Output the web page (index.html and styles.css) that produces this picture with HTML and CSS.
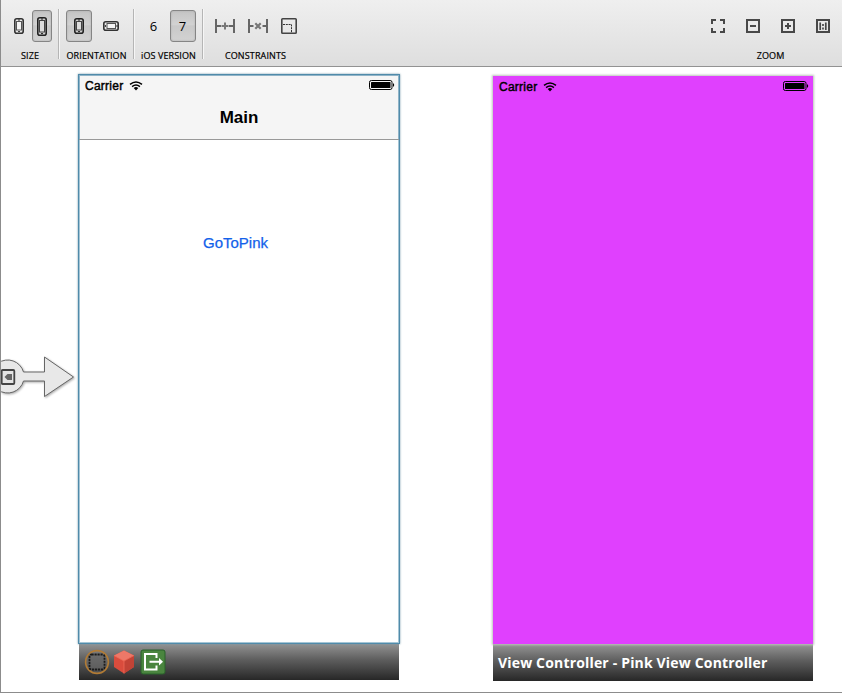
FILE: index.html
```html
<!DOCTYPE html>
<html lang="en">
<head>
<meta charset="utf-8">
<title>Storyboard</title>
<link rel="stylesheet" href="styles.css">
</head>
<body>
<svg class="defs" width="0" height="0">
  <symbol id="wifi" viewBox="0 0 14 10"><path d="M1 3.4Q7-1.4 13 3.4M3.1 5.6Q7 2.4 10.9 5.6" fill="none" stroke="currentColor" stroke-width="1.5"/><path d="M4.7 7Q7 5.2 9.3 7L7 9.4Z" fill="currentColor"/></symbol>
  <symbol id="battery" viewBox="0 0 26 10"><rect x=".5" y=".5" width="22.5" height="9" rx="1.8" fill="none" stroke="currentColor"/><rect x="2" y="2" width="19.5" height="6" rx=".6" fill="currentColor"/><path d="M24 3.2q1.2.2 1.2 1.8T24 6.8Z" fill="currentColor"/></symbol>
</svg>
<div class="window">
  <header class="toolbar">
    <section class="group size">
      <div class="buttons">
        <button class="tool narrow"><svg width="10" height="16" viewBox="0 0 10 16" fill="none"><rect x=".8" y=".8" width="8.4" height="14.4" rx="2" stroke="#333" stroke-width="1.6"/><rect x="2.5" y="3.5" width="5" height="8.5" fill="#f5f5f5" stroke="#555"/><path d="M4 2h2M4 13.6h2" stroke="#333"/></svg></button>
        <button class="tool narrow selected"><svg width="10" height="19" viewBox="0 0 10 19" fill="none"><rect x=".8" y=".8" width="8.4" height="17.4" rx="2" stroke="#222" stroke-width="1.6"/><rect x="2.5" y="3.5" width="5" height="11.5" fill="#ddd" stroke="#444"/><path d="M4 2h2M4 16.6h2" stroke="#222"/></svg></button>
      </div>
      <span class="label">SIZE</span>
    </section>
    <section class="group orientation">
      <div class="buttons">
        <button class="tool selected"><svg width="10" height="16" viewBox="0 0 10 16" fill="none"><rect x=".8" y=".8" width="8.4" height="14.4" rx="2" stroke="#222" stroke-width="1.6"/><rect x="2.5" y="3.5" width="5" height="8.5" fill="#ddd" stroke="#444"/><path d="M4 2h2M4 13.6h2" stroke="#222"/></svg></button>
        <button class="tool"><svg width="16" height="10" viewBox="0 0 16 10" fill="none"><rect x=".8" y=".8" width="14.4" height="8.4" rx="2" stroke="#333" stroke-width="1.6"/><rect x="4" y="2.5" width="8.5" height="5" fill="#f5f5f5" stroke="#555"/><path d="M2.4 4v2M14 4v2" stroke="#333"/></svg></button>
      </div>
      <span class="label">ORIENTATION</span>
    </section>
    <section class="group version">
      <div class="buttons">
        <button class="tool">6</button>
        <button class="tool selected">7</button>
      </div>
      <span class="label">iOS VERSION</span>
    </section>
    <section class="group constraints">
      <div class="buttons">
        <svg width="20" height="14" viewBox="0 0 20 14" fill="none" stroke-width="2"><path d="M1 0v14M19 0v14M1 7h5M14 7h5" stroke="#666"/><path d="M6.5 7h7M10 3.5v7" stroke="#777"/></svg>
        <svg width="20" height="14" viewBox="0 0 20 14" fill="none" stroke-width="2"><path d="M1 0v14M19 0v14M1 7h4.5M14.5 7H19" stroke="#666"/><path d="m7.3 4.3 5.4 5.4m0-5.4-5.4 5.4" stroke="#777" stroke-width="2.2"/></svg>
        <svg width="16" height="16" viewBox="0 0 16 16" fill="none"><rect x=".8" y=".8" width="14.4" height="14.4" rx=".8" stroke="#444" stroke-width="1.6"/><path d="M2 6.5h8.5V15" stroke="#333" stroke-dasharray="2 .8"/></svg>
      </div>
      <span class="label">CONSTRAINTS</span>
    </section>
    <section class="group zoom">
      <div class="buttons">
        <svg width="14" height="14" viewBox="0 0 14 14" fill="none" stroke="#484848" stroke-width="2"><path d="M1 5V1h4M9 1h4v4M13 9v4H9M5 13H1V9"/></svg>
        <svg width="14" height="14" viewBox="0 0 14 14" fill="none" stroke="#484848" stroke-width="2"><path d="M1 1h12v12H1ZM4 7h6"/></svg>
        <svg width="14" height="14" viewBox="0 0 14 14" fill="none" stroke="#484848" stroke-width="2"><path d="M1 1h12v12H1ZM4 7h6M7 4v6"/></svg>
        <svg width="14" height="14" viewBox="0 0 14 14" fill="none" stroke="#484848" stroke-width="2"><path d="M1 1h12v12H1Z"/><path d="M4.2 3.5V11M9.8 3.5V11M7 5v2M7 8.5v2" stroke-width="1.7"/></svg>
      </div>
      <span class="label">ZOOM</span>
    </section>
  </header>
  <main class="canvas">
    <svg class="entry" width="80" height="50" viewBox="0 0 80 50">
      <path d="M22.5 21H43.5V6L72.5 26 43.5 45.5V30H22.5A16.5 16.5 0 1 1 22.5 21Z" fill="#e8e8e8" stroke="#666"/>
      <rect x=".7" y="19" width="12.6" height="14" rx="1" fill="#e4e4e4" stroke="#444" stroke-width="1.8"/>
      <path d="M3.5 26 6.5 23H11v6H6.5Z" fill="#666"/>
    </svg>
    <article class="scene main-scene">
      <div class="screen">
        <div class="navigation">
          <div class="status"><span class="carrier">Carrier</span><svg class="wifi" width="14" height="10"><use href="#wifi"/></svg><svg class="battery" width="26" height="10"><use href="#battery"/></svg></div>
          <h1 class="title">Main</h1>
        </div>
        <a class="link">GoToPink</a>
      </div>
      <footer class="dock">
        <svg width="26" height="26" viewBox="0 0 26 26"><circle cx="13" cy="13" r="11.4" fill="#777" fill-opacity=".35" stroke="#b17b35" stroke-width="1.6"/><rect x="5.5" y="5.5" width="15" height="15" rx="2" fill="#666" fill-opacity=".5" stroke="#1b1b1b" stroke-width="1.8" stroke-dasharray="2.2 .8"/></svg>
        <svg width="22" height="26" viewBox="0 0 22 26"><path d="M11 1.5 21 6.5V18L11 24.5 1 18V6.5Z" fill="#d94c3d"/><path d="M11 1.5 21 6.5 11 12 1 6.5Z" fill="#ee7868"/><path d="M11 12 21 6.5V18L11 24.5Z" fill="#c24336"/><path d="M1 6.5 11 12V24.5M11 12 21 6.5" fill="none" stroke="#ef6b58" stroke-width=".8"/></svg>
        <svg class="exit" width="26" height="26" viewBox="0 0 26 26"><rect x="1" y="1" width="24" height="24" rx="2" fill="#4a853f" stroke="#28602a"/><path d="M16.5 9V5H5v15.5h11.5v-4M9.5 12.7H21" fill="none" stroke="#fff" stroke-width="2"/><path d="m19 9 4 3.7-4 3.8Z" fill="#fff"/></svg>
      </footer>
    </article>
    <article class="scene pink-scene">
      <div class="screen">
        <div class="status"><span class="carrier">Carrier</span><svg class="wifi" width="14" height="10"><use href="#wifi"/></svg><svg class="battery" width="26" height="10"><use href="#battery"/></svg></div>
      </div>
      <footer class="dock"><span class="scene-name">View Controller - Pink View Controller</span></footer>
    </article>
  </main>
</div>
</body>
</html>
```

FILE: styles.css
```css
* { box-sizing: border-box; }
body { margin: 0; color: #000; background: #fff; font-family: "Liberation Sans", sans-serif; }
svg { display: block; flex: none; }
.defs { position: absolute; }
.window { display: flex; flex-direction: column; width: 842px; height: 693px; border-left: 1px solid #8c8c8c; border-bottom: 1px solid #8c8c8c; overflow: hidden; }
.toolbar { display: flex; flex: none; height: 67px; padding-top: 10px; border-bottom: 1px solid #929292; background: linear-gradient(#efefef, #dedede); }
.group { position: relative; display: flex; flex-direction: column; align-items: center; height: 50px; }
.group:nth-child(-n+3)::after { content: ""; position: absolute; right: -1px; top: -1px; width: 2px; height: 50px; background: linear-gradient(90deg, #b5b5b5 50%, #f6f6f6 50%); }
.size { width: 58px; }
.orientation { width: 75px; }
.version { width: 69px; }
.constraints { width: 105px; }
.zoom { width: 143px; margin-left: auto; }
.buttons { display: flex; flex: none; align-items: center; height: 32px; }
.tool { display: flex; align-items: center; justify-content: center; width: 26px; height: 32px; padding: 0; border: 1px solid transparent; border-radius: 3px; background: none; color: #000; font: 13px "Open Sans", sans-serif; }
.narrow { width: 20px; }
.selected { border-color: #858585; background: linear-gradient(#c4c4c4, #d2d2d2 45%, #c9c9c9 50%, #d2d2d2); box-shadow: inset 0 0 2px #aaa; }
.size .buttons { gap: 3px; }
.orientation .buttons { gap: 6px; margin-left: -3px; }
.version .buttons { gap: 3px; margin-left: -1px; }
.constraints .buttons { gap: 13px; margin-left: 1px; }
.zoom .buttons { gap: 21px; }
.label { flex: none; margin-top: 7px; font: 9px/13px "Open Sans", sans-serif; letter-spacing: .12px; white-space: nowrap; -webkit-text-stroke: .2px #000; }
.canvas { position: relative; flex: 1; background: #fff; }
.entry { position: absolute; left: 0; top: 284px; filter: drop-shadow(1px 1px 1px #aaa); }
.scene { position: absolute; width: 320px; }
.main-scene { left: 78px; top: 8px; }
.pink-scene { left: 492px; top: 9px; }
.screen { position: relative; height: 568px; background: #fff; }
.main-scene .screen { outline: 1px solid #508baa; box-shadow: 0 0 2px 1px #7899aa, inset 0 0 0 1px #a5c5d5; }
.pink-scene .screen { background: #e040fe; box-shadow: 0 0 2px 1px #bbc4bb; }
.navigation { height: 65px; border-bottom: 1px solid #999; background: #f5f5f5; box-shadow: inset 1px 1px #8fb3c7, inset -1px 0 #8fb3c7; }
.status { display: flex; align-items: center; height: 22px; padding: 0 4px 0 6px; }
.carrier { font-size: 12px; line-height: 14px; letter-spacing: .25px; -webkit-text-stroke: .45px #000; }
.wifi { margin-left: 5.5px; }
.battery { margin-left: auto; margin-bottom: 2px; }
.title { margin: 11px 0 0; font-size: 17px; line-height: 20px; font-weight: bold; text-align: center; }
.link { display: block; margin-top: 94px; padding-right: 7px; color: #1261ea; font-size: 15px; line-height: 18px; text-align: center; -webkit-text-stroke: .25px #1261ea; }
.dock { display: flex; align-items: center; height: 37px; padding-left: 5px; background: linear-gradient(#969696, #5e5e5e 45%, #272727); }
.main-scene .dock { gap: 3px; }
.exit { margin-left: 2px; }
.scene-name { color: #fff; font: bold 14px "Open Sans", sans-serif; letter-spacing: .17px; white-space: nowrap; }
```
